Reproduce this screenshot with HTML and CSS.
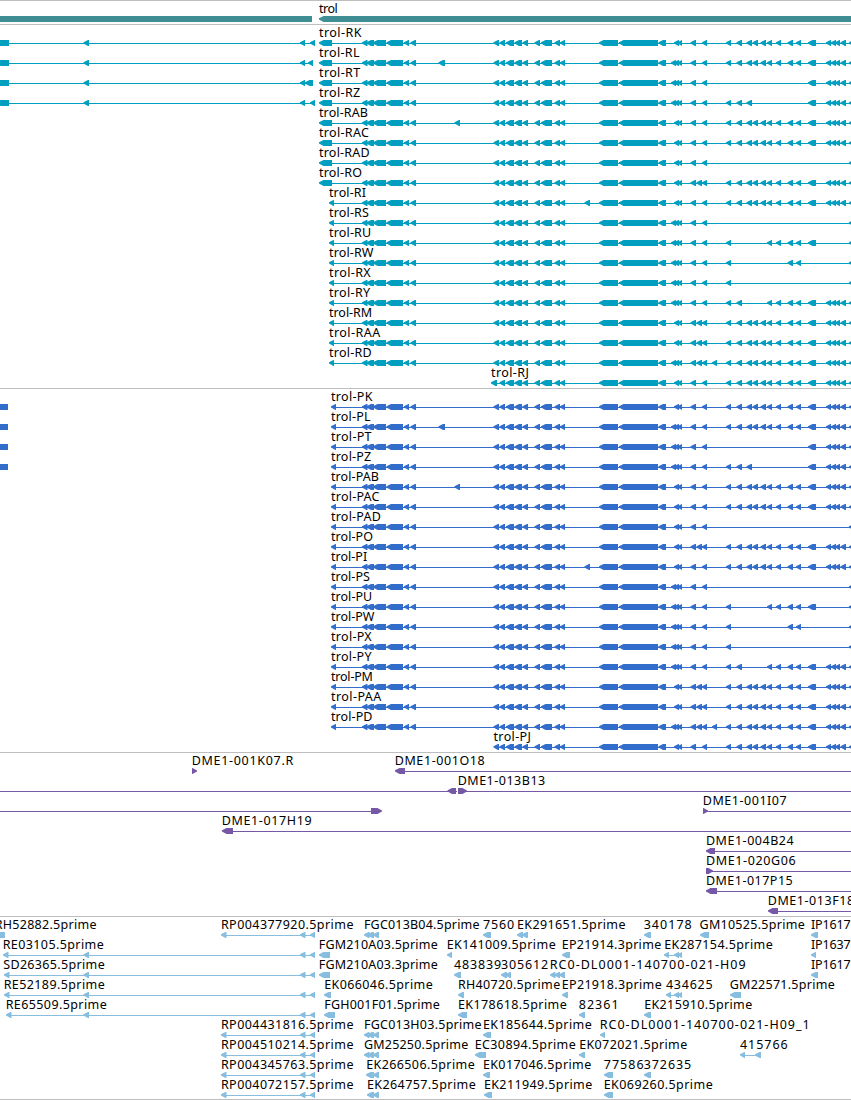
FILE: index.html
```html
<!DOCTYPE html>
<html lang="en">
<head>
    <meta charset="UTF-8">
    <meta name="viewport" content="width=device-width, initial-scale=1.0">
    <title>trol</title>
    <link rel="stylesheet" href="styles.css">
</head>
<body>
    <div class="browser">
        <div class="track gene" id="gene"></div>
        <div class="track transcript" id="transcript"></div>
        <div class="track protein" id="protein"></div>
        <div class="track bac" id="bac"></div>
        <div class="track est" id="est"></div>
    </div>
    <script src="script.js"></script>
</body>
</html>
```

FILE: styles.css
```css
body {
    margin: 0;
    padding: 0;
    background: #fff;
}
.browser {
    width: 851px;
    height: 1100px;
    box-sizing: border-box;
    border-bottom: 1px solid #bebebe;
    overflow: hidden;
}
.track {
    border-top: 1px solid #bebebe;
    padding-bottom: 3px;
}
.track:last-child {
    padding-bottom: 2px;
}
.row {
    display: block;
    width: 851px;
    height: 20px;
    overflow: visible;
}
.row text {
    font-family: 'Noto Sans', 'Open Sans', sans-serif;
    font-size: 12.5px;
    fill: #000;
}
.gene {
    fill: #3f8e94;
}
.transcript {
    fill: #009fc0;
}
.protein {
    fill: #326dcc;
}
.bac {
    fill: #7559a6;
}
.est {
    fill: #87bddf;
}
```

FILE: script.js
```js
const END = 860;

// a feature is { line: [from, to], left: [[x1, x2]...], right: [...], box: [...] }
// a label is [text, x1, x2]
function label([text, x1, x2]) {
    const pad = text[0] === 't' ? 0 : 0.8;
    return `<text x="${x1 - pad}" y="12" textLength="${x2 - x1 + pad + 0.2}">${text}</text>`;
}

function leftArrow([x1, x2]) {
    const neck = Math.min(x1 + 4.5, x2);
    return `<path d="M${x1} 17.2L${neck} 15H${x2}V21H${neck}L${x1} 18.6Z"/>`;
}

function rightArrow([x1, x2]) {
    const neck = Math.max(x2 - 4.5, x1);
    return `<path d="M${x2} 17.4L${neck} 15H${x1}V21H${neck}L${x2} 18.6Z"/>`;
}

function box([x1, x2, y = 15, h = 6]) {
    return `<rect x="${x1}" y="${y}" width="${x2 - x1}" height="${h}"/>`;
}

function feature(f) {
    return (f.line ? box([f.line[0], f.line[1], 18, 1]) : '') +
        (f.box || []).map(b => box(b)).join('') +
        (f.left || []).map(leftArrow).join('') +
        (f.right || []).map(rightArrow).join('');
}

function draw(id, rows) {
    document.getElementById(id).innerHTML = rows.map(row =>
        `<svg class="row" viewBox="0 0 851 20">${row.features.map(feature).join('')}${row.labels.map(label).join('')}</svg>`
    ).join('');
}

// gene
draw('gene', [{
    labels: [['trol', 319, 337.5]],
    features: [{ box: [[0, 312]] }, { left: [[319, END]] }]
}]);

// exons shared by all the isoforms
const head = [[362, 367.5], [366.5, 374], [373, 386], [386.5, 403], [404, 409], [410.5, 416], [493.5, 499]];
const common = [[499.5, 505], [506, 514], [514.5, 522], [522.5, 528], [534.5, 540],
    [541, 552], [554.5, 560], [560, 565], [599, 618], [619, 658], [658.5, 666],
    [674, 679], [677.5, 682], [690.5, 696], [702, 707], [849, 855]];
const triple = [671, 676];
const ro = [696.5, 702];
const mid = [[726, 731], [736.5, 742], [746.5, 752], [752.5, 758], [760.5, 766],
    [767, 772], [776, 781], [787.5, 793], [796, 801], [808, 816]];
const tail = [[826, 831], [831, 836], [835, 840], [840.5, 846]];
const all = [...mid, ...tail];

const isoforms = [
    { name: 'K', r: 361.3, p: 372.3, left: [310, 315], exons: all },
    { name: 'L', r: 359.3, p: 370.3, left: [308, 313], exons: [...all, triple, [438.5, 445]] },
    { name: 'T', r: 360, p: 371.3, left: [305, 313], exons: [mid[9], ...tail, triple] },
    { name: 'Z', r: 360, p: 371, left: [310, 315], exons: [...mid.slice(0, 3), mid[9], ...tail, triple] },
    { name: 'AB', r: 367.7, p: 378.7, exons: [...all, [454.5, 460]] },
    { name: 'AC', r: 368.7, p: 379.3, exons: all },
    { name: 'AD', r: 369.5, p: 380.7, exons: [] },
    { name: 'O', r: 361.7, p: 372.7, exons: [...all, ro] },
    { name: 'I', r: 365.7, p: 367, exons: [...all, [584.5, 590]] },
    { name: 'S', r: 368.7, p: 369.7, exons: [triple] },
    { name: 'U', r: 371, p: 372, exons: [mid[0], ...mid.slice(5), triple] },
    { name: 'W', r: 373.3, p: 374.3, exons: [mid[0], mid[7], mid[8], triple] },
    { name: 'X', r: 370.5, p: 371.5, exons: [mid[0], triple] },
    { name: 'Y', r: 370, p: 371.3, exons: [mid[0], mid[1], ...mid.slice(5), ...tail, triple] },
    { name: 'M', r: 372, p: 372.7, exons: [...all, ro] },
    { name: 'AA', r: 380, p: 381, exons: [...all, ro] },
    { name: 'D', r: 371.5, p: 372.3, exons: [...all, ro, triple, [712, 717]] },
    { name: 'J', r: 528.7, p: 530.7, exons: all }
];

draw('transcript', isoforms.map((iso, i) => {
    let first = i < 8 ? [319, 332] : [329, 334];
    if (iso.name === 'J') first = [491, 497];
    const features = [{
        line: [first[0] + 3, END],
        left: [first, ...(iso.name === 'J' ? [] : head), ...common, ...iso.exons]
    }];
    if (iso.left) {
        features.push({ line: [0, iso.left[1]], box: [[0, 9]], left: [[83.5, 89], [300, 305], iso.left] });
    }
    return { labels: [[`trol-R${iso.name}`, first[0], iso.r]], features };
}));

draw('protein', isoforms.map(iso => {
    const isJ = iso.name === 'J';
    const first = isJ ? [493.5, 499] : [331, 336];
    const features = [{
        line: [first[0] + 3, END],
        left: [first, ...(isJ ? [] : head), ...common, ...iso.exons]
    }];
    if (iso.left) features.push({ box: [[0, 8]] });
    return { labels: [[`trol-P${iso.name}`, first[0], iso.p]], features };
}));

// BAC clones
draw('bac', [
    {
        labels: [['DME1-001K07.R', 192.5, 293], ['DME1-001O18', 395.5, 484.5]],
        features: [{ right: [[192, 197]] }, { line: [400, END], left: [[395, 405]] }]
    },
    {
        labels: [['DME1-013B13', 458.5, 545]],
        features: [{ line: [0, 457], left: [[447.5, 456]] }, { line: [460, END], right: [[458, 467]] }]
    },
    {
        labels: [['DME1-001I07', 703.5, 786.5]],
        features: [{ line: [0, 375], right: [[371, 382]] }, { line: [703, END], right: [[703, 708]] }]
    },
    {
        labels: [['DME1-017H19', 222.5, 311.5]],
        features: [{ line: [226, END], left: [[222, 233]] }]
    },
    {
        labels: [['DME1-004B24', 706.7, 793.5]],
        features: [{ line: [710, END], left: [[706, 715]] }]
    },
    {
        labels: [['DME1-020G06', 706.7, 795.5]],
        features: [{ line: [710, END], right: [[706, 713]] }]
    },
    {
        labels: [['DME1-017P15', 706.7, 792.5]],
        features: [{ line: [710, END], left: [[706, 717]] }]
    },
    {
        labels: [['DME1-013F18', 768.5, 854]],
        features: [{ line: [772, END], left: [[768, 778]] }]
    }
]);

// ESTs
const spliced = (x, ...more) => ({ line: [x + 3, 315], left: [[x, x + 5.5], ...more, [300, 305.5], [310, 315]] });
const short = (...left) => ({ left });
const fgc = short([364, 369.5], [367.5, 374], [373, 379]);

draw('est', [
    {
        labels: [['RH52882.5prime', -4.5, 96.3], ['RP004377920.5prime', 221.7, 353.3], ['FGC013B04.5prime', 364.7, 479.3],
            ['7560', 483.7, 514], ['EK291651.5prime', 517.7, 625.3], ['340178', 644.5, 691.5],
            ['GM10525.5prime', 700.3, 804.5], ['IP1617', 811.7, 850.5]],
        features: [{ box: [[0, 5]] }, spliced(221), fgc, short([483, 491], [517, 523], [522, 528], [644, 651], [700, 709], [811, 818])]
    },
    {
        labels: [['RE03105.5prime', 3.5, 103.5], ['FGM210A03.5prime', 319.5, 437.5], ['EK141009.5prime', 447.5, 555.5],
            ['EP21914.3prime', 562.5, 661], ['EK287154.5prime', 665, 772.5], ['IP1637', 811.7, 850.5]],
        features: [spliced(3, [83.5, 89]), short([319, 330], [447, 452], [562, 570], [811, 816]),
            { line: [666, 682], left: [[664, 669], [674, 679], [677.5, 682]] }]
    },
    {
        labels: [['SD26365.5prime', 4, 104.5], ['FGM210A03.3prime', 319.5, 437.5], ['483839', 454.8, 501],
            ['305612', 501.7, 548], ['RC0-DL0001-140700-021-H09', 550.5, 745.5], ['IP1617', 811.7, 850.5]],
        features: [spliced(4, [83.5, 89]), short([319, 330], [454, 461], [501, 507], [505.5, 511],
            [550, 555.5], [554.5, 560], [559, 565], [811, 818])]
    },
    {
        labels: [['RE52189.5prime', 4.5, 104.5], ['EK066046.5prime', 325, 432.5], ['RH40720.5prime', 458.7, 560],
            ['EP21918.3prime', 562.5, 661.5], ['434625', 666.7, 712.5], ['GM22571.5prime', 730.5, 834.5]],
        features: [spliced(4, [83.5, 89]), short([324, 331], [458, 464], [562, 568], [730, 741]),
            { line: [668, 682], left: [[666, 671], [674, 679], [677.5, 682]] }]
    },
    {
        labels: [['RE65509.5prime', 6.5, 106.5], ['FGH001F01.5prime', 325, 439.5], ['EK178618.5prime', 458.7, 566.5],
            ['82361', 579.5, 618.5], ['EK215910.5prime', 645, 752]],
        features: [spliced(6, [83.5, 89]), short([324, 335], [458, 467], [579, 585], [644, 651])]
    },
    {
        labels: [['RP004431816.5prime', 221.7, 353.3], ['FGC013H03.5prime', 364.7, 481.3],
            ['EK185644.5prime', 483.7, 591.5], ['RC0-DL0001-140700-021-H09_1', 600.5, 809.5]],
        features: [spliced(221), fgc, short([483, 491], [600, 605])]
    },
    {
        labels: [['RP004510214.5prime', 221.7, 353.3], ['GM25250.5prime', 364.7, 468], ['EC30894.5prime', 475.5, 575.5],
            ['EK072021.5prime', 580, 687], ['415766', 740.7, 787.5]],
        features: [spliced(221), fgc, short([475, 486], [579, 585]), { line: [743, 761], left: [[740, 745], [755, 761]] }]
    },
    {
        labels: [['RP004345763.5prime', 221.7, 353.3], ['EK266506.5prime', 367, 474.5], ['EK017046.5prime', 483.7, 591],
            ['77586', 604.5, 643.5], ['372635', 644.5, 691]],
        features: [spliced(221), short([366, 374], [373, 379], [483, 490], [604, 613], [644, 651])]
    },
    {
        labels: [['RP004072157.5prime', 221.7, 353.3], ['EK264757.5prime', 367.7, 475.5],
            ['EK211949.5prime', 484.7, 592], ['EK069260.5prime', 604.5, 712.5]],
        features: [spliced(221), short([367, 374], [373, 379], [484, 492], [604, 613])]
    }
]);
```
